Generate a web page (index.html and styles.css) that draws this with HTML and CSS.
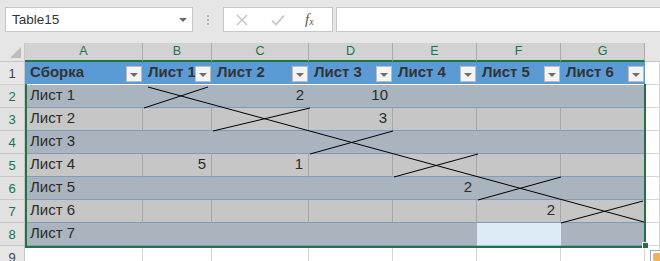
FILE: index.html
```html
<!DOCTYPE html>
<html lang="ru">
  <head>
    <meta charset="UTF-8" />
    <title>Сборка</title>
    <link rel="stylesheet" href="styles.css">
  </head>
  <body>
    <div class="formula-row">
      <div class="name-box">
        <span class="name-text">Table15</span>
        <span class="caret"></span>
      </div>
      <div class="grip"><i></i><i></i><i></i></div>
      <div class="fx-buttons">
        <svg class="fx-icon" width="12" height="12" viewBox="0 0 12 12">
          <path d="M1 1 L11 11 M11 1 L1 11" stroke="#c3c3c3" stroke-width="1.4" fill="none" />
        </svg>
        <svg class="fx-icon" width="14" height="12" viewBox="0 0 14 12">
          <path d="M1 6.5 L5 10.5 L13 1.5" stroke="#c3c3c3" stroke-width="1.6" fill="none" />
        </svg>
        <span class="fx-label">f<sub>x</sub></span>
      </div>
      <div class="formula-input"></div>
    </div>

    <div class="sheet">
      <!-- column headers -->
      <div class="corner"><span class="corner-mark"></span></div>
      <div class="col-head sel">A</div>
      <div class="col-head sel">B</div>
      <div class="col-head sel">C</div>
      <div class="col-head sel">D</div>
      <div class="col-head sel">E</div>
      <div class="col-head sel">F</div>
      <div class="col-head sel">G</div>
      <div class="col-head blank"></div>

      <!-- row 1: table header -->
      <div class="row-head">1</div>
      <div class="cell th">Сборка<span class="filter"></span></div>
      <div class="cell th">Лист 1<span class="filter"></span></div>
      <div class="cell th">Лист 2<span class="filter"></span></div>
      <div class="cell th">Лист 3<span class="filter"></span></div>
      <div class="cell th">Лист 4<span class="filter"></span></div>
      <div class="cell th">Лист 5<span class="filter"></span></div>
      <div class="cell th">Лист 6<span class="filter"></span></div>
      <div class="cell out"></div>

      <!-- row 2 -->
      <div class="row-head sel">2</div>
      <div class="cell band">Лист 1</div>
      <div class="cell band"></div>
      <div class="cell band num">2</div>
      <div class="cell band num">10</div>
      <div class="cell band"></div>
      <div class="cell band"></div>
      <div class="cell band"></div>
      <div class="cell out"></div>

      <!-- row 3 -->
      <div class="row-head sel">3</div>
      <div class="cell plain">Лист 2</div>
      <div class="cell plain"></div>
      <div class="cell plain"></div>
      <div class="cell plain num">3</div>
      <div class="cell plain"></div>
      <div class="cell plain"></div>
      <div class="cell plain"></div>
      <div class="cell out"></div>

      <!-- row 4 -->
      <div class="row-head sel">4</div>
      <div class="cell band">Лист 3</div>
      <div class="cell band"></div>
      <div class="cell band"></div>
      <div class="cell band"></div>
      <div class="cell band"></div>
      <div class="cell band"></div>
      <div class="cell band"></div>
      <div class="cell out"></div>

      <!-- row 5 -->
      <div class="row-head sel">5</div>
      <div class="cell plain">Лист 4</div>
      <div class="cell plain num">5</div>
      <div class="cell plain num">1</div>
      <div class="cell plain"></div>
      <div class="cell plain"></div>
      <div class="cell plain"></div>
      <div class="cell plain"></div>
      <div class="cell out"></div>

      <!-- row 6 -->
      <div class="row-head sel">6</div>
      <div class="cell band">Лист 5</div>
      <div class="cell band"></div>
      <div class="cell band"></div>
      <div class="cell band"></div>
      <div class="cell band num">2</div>
      <div class="cell band"></div>
      <div class="cell band"></div>
      <div class="cell out"></div>

      <!-- row 7 -->
      <div class="row-head sel">7</div>
      <div class="cell plain">Лист 6</div>
      <div class="cell plain"></div>
      <div class="cell plain"></div>
      <div class="cell plain"></div>
      <div class="cell plain"></div>
      <div class="cell plain num">2</div>
      <div class="cell plain"></div>
      <div class="cell out"></div>

      <!-- row 8 -->
      <div class="row-head sel">8</div>
      <div class="cell band">Лист 7</div>
      <div class="cell band"></div>
      <div class="cell band"></div>
      <div class="cell band"></div>
      <div class="cell band"></div>
      <div class="cell active"></div>
      <div class="cell band"></div>
      <div class="cell out"></div>

      <!-- row 9 -->
      <div class="row-head">9</div>
      <div class="cell out"></div>
      <div class="cell out"></div>
      <div class="cell out"></div>
      <div class="cell out"></div>
      <div class="cell out"></div>
      <div class="cell out"></div>
      <div class="cell out"></div>
      <div class="cell out"></div>

      <!-- drawn line shapes on top of the sheet -->
      <svg class="shapes" width="660" height="218" viewBox="0 0 660 218">
        <g stroke="#000" stroke-width="1" fill="none">
          <line x1="148" y1="44" x2="644" y2="179" />
          <line x1="144" y1="65" x2="208" y2="44" />
          <line x1="213" y1="88" x2="310" y2="65" />
          <line x1="310" y1="111" x2="393" y2="88" />
          <line x1="394" y1="134" x2="478" y2="111" />
          <line x1="478" y1="157" x2="561" y2="134" />
          <line x1="561" y1="180" x2="643" y2="158" />
        </g>
      </svg>

      <div class="selection"></div>
      <div class="fill-handle"></div>
      <div class="quick-analysis"><span class="qa-bolt"></span></div>
    </div>
  </body>
</html>
```

FILE: styles.css
```css
* {
  margin: 0;
  padding: 0;
  box-sizing: border-box;
}

body {
  font-family: "Liberation Sans", Arial, sans-serif;
  background: #ffffff;
  width: 660px;
  height: 261px;
  overflow: hidden;
}

/* Formula bar */
.formula-row {
  height: 43px;
  background: #e6e6e6;
  display: flex;
  align-items: flex-start;
  padding: 7px 0 0 5px;
}

.name-box {
  width: 188px;
  height: 25px;
  background: #ffffff;
  border: 1px solid #c6c6c6;
  display: flex;
  align-items: center;
  justify-content: space-between;
  padding: 0 5px 0 6px;
}

.name-text {
  font-size: 13.5px;
  color: #333333;
}

.caret {
  width: 0;
  height: 0;
  border-left: 4px solid transparent;
  border-right: 4px solid transparent;
  border-top: 4px solid #6a6a6a;
}

.grip {
  width: 30px;
  height: 25px;
  display: flex;
  flex-direction: column;
  align-items: center;
  justify-content: center;
  gap: 2px;
}

.grip i {
  display: block;
  width: 2px;
  height: 2px;
  background: #b4b4b4;
}

.fx-buttons {
  width: 110px;
  height: 25px;
  background: #ffffff;
  border: 1px solid #c6c6c6;
  display: flex;
  align-items: center;
  padding-left: 12px;
  gap: 23px;
}

.fx-label {
  font-family: "Liberation Serif", serif;
  font-style: italic;
  font-size: 15px;
  color: #595959;
  margin-left: -3px;
}

.fx-label sub {
  font-size: 10px;
  vertical-align: -1px;
}

.formula-input {
  flex: 1;
  height: 25px;
  margin-left: 3px;
  background: #ffffff;
  border: 1px solid #c6c6c6;
  border-right: none;
}

/* Worksheet grid */
.sheet {
  position: relative;
  display: grid;
  grid-template-columns: 25px 118px 69px 97px 84px 84px 84px 84px 15px;
  grid-template-rows: 19px repeat(9, 23px);
}

.corner {
  background: #e6e6e6;
  border-right: 1px solid #c6c6c6;
  border-bottom: 1px solid #c6c6c6;
  position: relative;
}

.corner-mark {
  position: absolute;
  right: 3px;
  bottom: 3px;
  width: 0;
  height: 0;
  border-left: 11px solid transparent;
  border-bottom: 11px solid #bcbcbc;
}

.col-head {
  background: #d2d2d2;
  border-right: 1px solid #ababab;
  font-size: 12.5px;
  color: #217346;
  display: flex;
  align-items: center;
  justify-content: center;
  padding-bottom: 1px;
}

.col-head.sel {
  border-bottom: 2px solid #217346;
}

.col-head.blank {
  background: #e6e6e6;
  border-right: none;
  border-bottom: 1px solid #c6c6c6;
}

.row-head {
  background: #e6e6e6;
  border-right: 1px solid #c6c6c6;
  border-bottom: 1px solid #d0d0d0;
  font-size: 13px;
  color: #444444;
  display: flex;
  align-items: flex-end;
  justify-content: center;
  padding-bottom: 3px;
}

.row-head.sel {
  background: #e1e1e1;
  color: #217346;
  border-bottom-color: #c6c6c6;
}

.cell {
  position: relative;
  font-size: 15px;
  color: #2b2b2b;
  display: flex;
  align-items: flex-end;
  padding: 0 5px 4px;
  white-space: nowrap;
  line-height: 17px;
}

.cell.num {
  justify-content: flex-end;
}

.cell.th {
  background: #5b9bd5;
  font-weight: bold;
  color: #333333;
  border-bottom: 1px solid #ffffff;
}

.filter {
  position: absolute;
  right: 1px;
  bottom: 2px;
  width: 16px;
  height: 16px;
  background: #f4f4f4;
  border: 1px solid #bcbcbc;
}

.filter::after {
  content: "";
  position: absolute;
  left: 3px;
  top: 6px;
  border-left: 4px solid transparent;
  border-right: 4px solid transparent;
  border-top: 4px solid #6d6d6d;
}

.cell.band {
  background: #a9b4be;
  border-bottom: 1px solid #7f9cbb;
}

.cell.plain {
  background: #c6c6c6;
  border-right: 1px solid #a6a6a6;
  border-bottom: 1px solid #7f9cbb;
}

.cell.active {
  background: #ddebf7;
  border-bottom: 1px solid #9bc2e6;
}

.cell.out {
  background: #ffffff;
  border-right: 1px solid #d4d4d4;
  border-bottom: 1px solid #d4d4d4;
}

/* Overlays: shapes, selection frame, handles */
.shapes {
  position: absolute;
  left: 0;
  top: 0;
  pointer-events: none;
}

.selection {
  position: absolute;
  left: 25px;
  top: 41px;
  width: 621px;
  height: 164px;
  border: 2px solid #217346;
  border-top: none;
  pointer-events: none;
}

.fill-handle {
  position: absolute;
  left: 642px;
  top: 199px;
  width: 7px;
  height: 7px;
  background: #217346;
  border: 1px solid #ffffff;
}

.quick-analysis {
  position: absolute;
  left: 650px;
  top: 207px;
  width: 20px;
  height: 20px;
  background: #ffffff;
  border: 1px solid #a6a6a6;
}

.qa-bolt {
  position: absolute;
  left: 2px;
  top: 2px;
  width: 8px;
  height: 8px;
  background: #f0b060;
  border-radius: 2px;
}
```
